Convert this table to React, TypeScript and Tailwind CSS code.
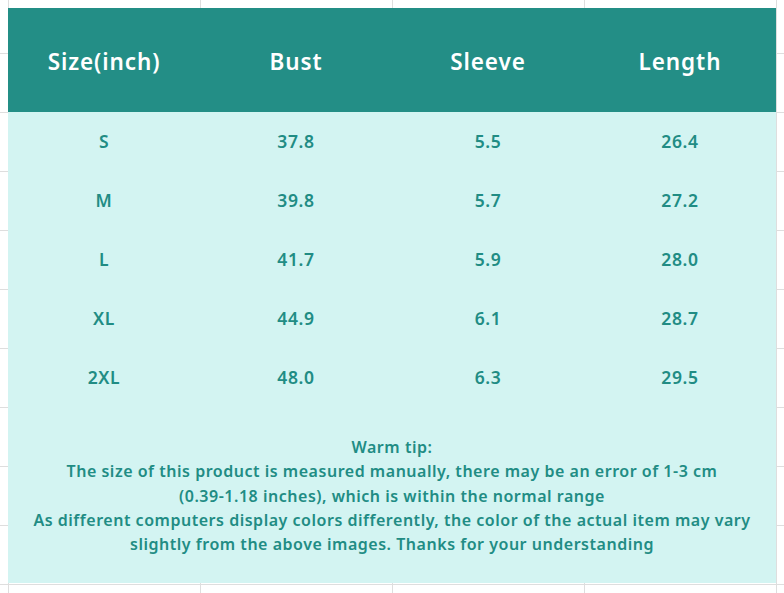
const headers = ['Size(inch)', 'Bust', 'Sleeve', 'Length'];

const rows = [
  ['S', '37.8', '5.5', '26.4'],
  ['M', '39.8', '5.7', '27.2'],
  ['L', '41.7', '5.9', '28.0'],
  ['XL', '44.9', '6.1', '28.7'],
  ['2XL', '48.0', '6.3', '29.5'],
];

const tipLines = [
  'Warm tip:',
  'The size of this product is measured manually, there may be an error of 1-3 cm',
  '(0.39-1.18 inches), which is within the normal range',
  'As different computers display colors differently, the color of the actual item may vary',
  'slightly from the above images. Thanks for your understanding',
];

export default function App() {
  return (
    <div
      className="w-[784px] h-[593px] overflow-hidden bg-white bg-[linear-gradient(to_right,#dedede_1px,transparent_1px),linear-gradient(to_bottom,#dedede_1px,transparent_1px)] bg-[size:192px_59px] bg-[position:8px_112px] pt-2 pl-2"
      style={{ fontFamily: '"Noto Sans", "Open Sans", sans-serif' }}
    >
      <div className="w-[768px]">
        {/* header */}
        <div className="grid grid-cols-4 h-[104px] bg-[#238e86] text-white text-[22.5px] tracking-[0.9px] font-semibold">
          {headers.map((h) => (
            <div key={h} className="flex items-center justify-center pt-[3px]">
              {h}
            </div>
          ))}
        </div>

        {/* body */}
        <div className="h-[471px] bg-[#d3f4f2] text-[#218c84] font-semibold">
          {rows.map((r) => (
            <div key={r[0]} className="grid grid-cols-4 h-[59px] text-[17.5px] tracking-[0.6px]">
              {r.map((c, i) => (
                <div key={i} className="flex items-center justify-center">
                  {c}
                </div>
              ))}
            </div>
          ))}

          <div className="pt-[28px] text-center text-[16px] tracking-[0.52px] leading-[24.3px]">
            {tipLines.map((t) => (
              <div key={t} className="whitespace-nowrap">
                {t}
              </div>
            ))}
          </div>
        </div>
      </div>
    </div>
  );
}
